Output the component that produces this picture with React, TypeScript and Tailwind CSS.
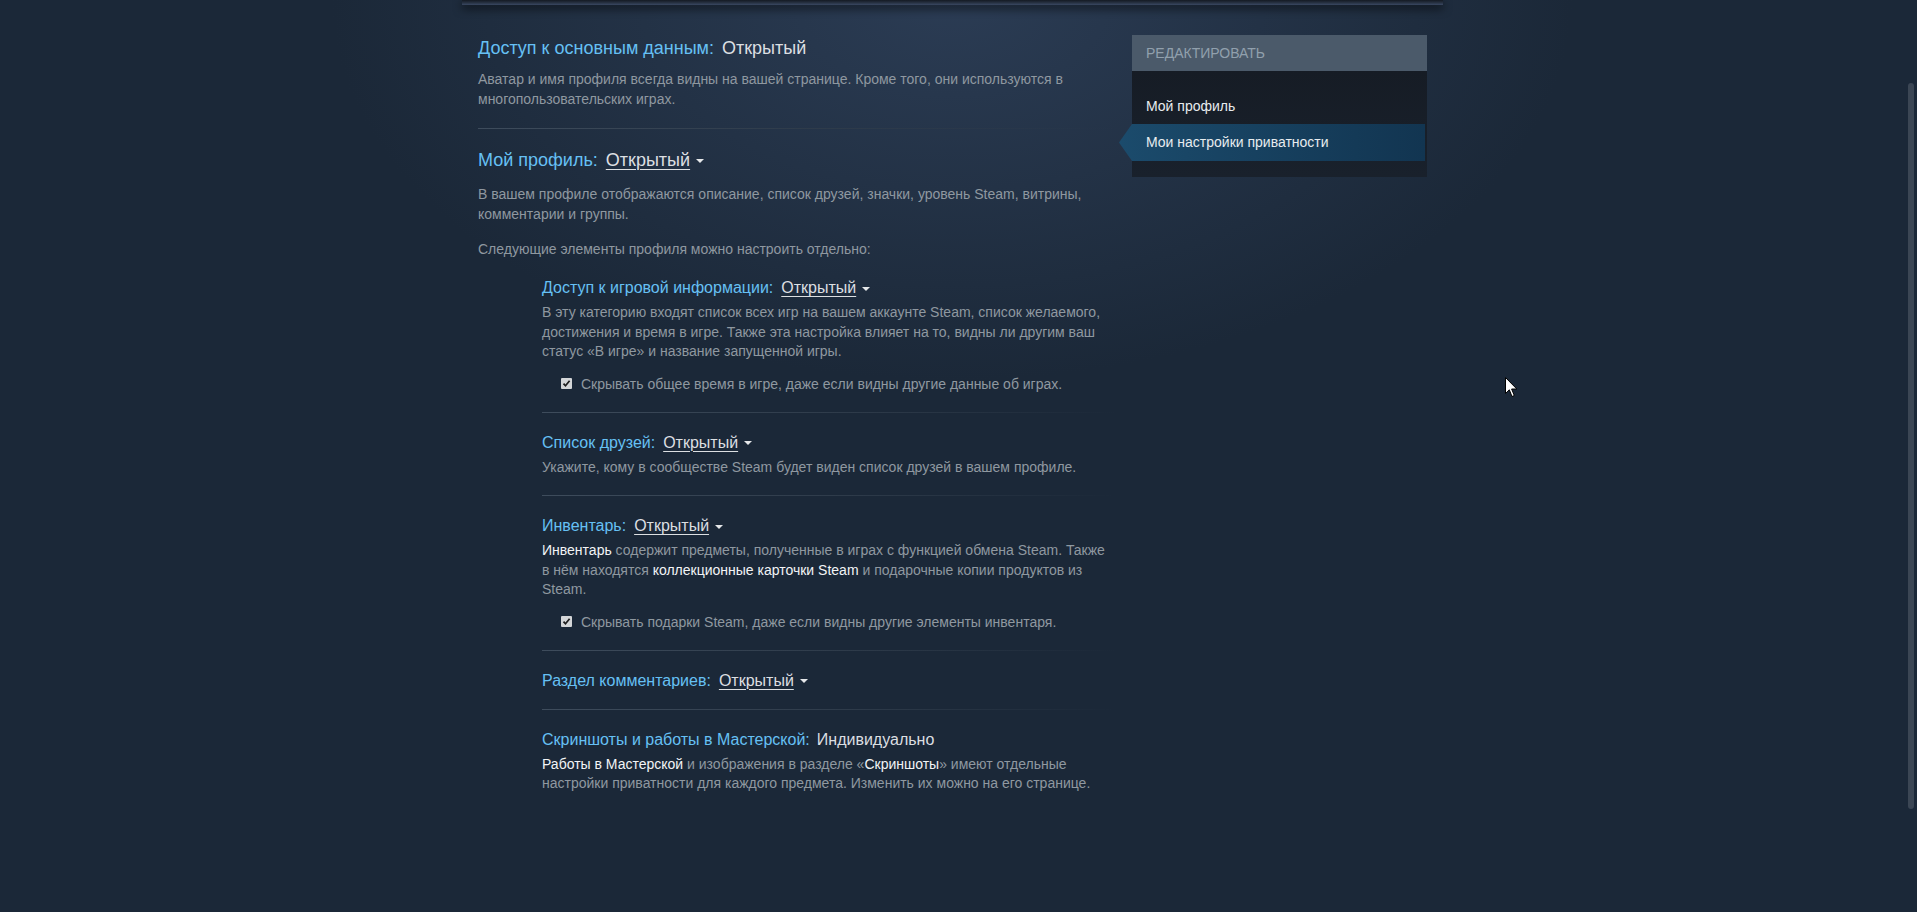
const FONT = "font-['Liberation_Sans',Arial,sans-serif]"

function Caret() {
  return (
    <span className="inline-block w-0 h-0 ml-[6px] align-middle border-l-[4px] border-r-[4px] border-t-[4px] border-l-transparent border-r-transparent border-t-[#e6e8ea]" />
  )
}

function Dropdown({ value }: { value: string }) {
  return (
    <span className="ml-[8px] whitespace-nowrap">
      <span className="text-[#dcdfe2] underline underline-offset-[3px] decoration-1">{value}</span>
      <Caret />
    </span>
  )
}

function Check() {
  return (
    <span className="inline-flex shrink-0 items-center justify-center w-[11px] h-[11px] bg-[#d4d6d8] rounded-[1px] mr-[9px]">
      <svg width="9" height="9" viewBox="0 0 9 9">
        <path d="M1.5 4.6 L3.5 6.8 L7.6 1.8" fill="none" stroke="#1c1c1c" strokeWidth="1.7" />
      </svg>
    </span>
  )
}

const W = ({ children }: { children: React.ReactNode }) => <span className="text-[#f2f4f6]">{children}</span>

type Sub = {
  label: string
  value: string
  dropdown: boolean
  desc?: React.ReactNode
  checkbox?: string
}

const SUBS: Sub[] = [
  {
    label: 'Доступ к игровой информации:',
    value: 'Открытый',
    dropdown: true,
    desc: 'В эту категорию входят список всех игр на вашем аккаунте Steam, список желаемого, достижения и время в игре. Также эта настройка влияет на то, видны ли другим ваш статус «В игре» и название запущенной игры.',
    checkbox: 'Скрывать общее время в игре, даже если видны другие данные об играх.',
  },
  {
    label: 'Список друзей:',
    value: 'Открытый',
    dropdown: true,
    desc: 'Укажите, кому в сообществе Steam будет виден список друзей в вашем профиле.',
  },
  {
    label: 'Инвентарь:',
    value: 'Открытый',
    dropdown: true,
    desc: (
      <>
        <W>Инвентарь</W> содержит предметы, полученные в играх с функцией обмена Steam. Также в нём находятся{' '}
        <W>коллекционные карточки Steam</W> и подарочные копии продуктов из Steam.
      </>
    ),
    checkbox: 'Скрывать подарки Steam, даже если видны другие элементы инвентаря.',
  },
  { label: 'Раздел комментариев:', value: 'Открытый', dropdown: true },
  {
    label: 'Скриншоты и работы в Мастерской:',
    value: 'Индивидуально',
    dropdown: false,
    desc: (
      <>
        <W>Работы в Мастерской</W> и изображения в разделе «<W>Скриншоты</W>» имеют отдельные настройки приватности для
        каждого предмета. Изменить их можно на его странице.
      </>
    ),
  },
]

function Separator() {
  return <div className="h-px bg-gradient-to-r from-[#3e4c5c] via-[#2f3c4b] to-transparent" />
}

export default function App() {
  return (
    <div
      className={`${FONT} relative h-[912px] overflow-hidden bg-[#1b2838] bg-[radial-gradient(ellipse_620px_380px_at_952px_0px,#2b3c54_0%,#1b2838_100%)]`}
    >
      <div className="flex justify-center pr-[12px]">
        <div className="w-[981px]">
          {/* top bar of the page frame */}
          <div className="h-[5px] bg-gradient-to-b from-[#141a23] via-[#252f3f] to-[#3a4862] shadow-[0_3px_10px_rgba(0,0,0,0.75)]" />

          <div className="flex justify-between px-4 pt-[31px]">
            {/* main column */}
            <div className="w-[638px] text-[14px] text-[#8f98a0]">
              <h2 className="text-[18px] leading-[24px] text-[#66c0f4]">
                Доступ к основным данным:<span className="ml-[8px] text-[#dcdfe2]">Открытый</span>
              </h2>
              <p className="mt-[9px] leading-[20px]">
                Аватар и имя профиля всегда видны на вашей странице. Кроме того, они используются в многопользовательских
                играх.
              </p>
              <div className="mt-[19px]">
                <Separator />
              </div>

              <h2 className="mt-[19px] text-[18px] leading-[24px] text-[#66c0f4]">
                Мой профиль:
                <Dropdown value="Открытый" />
              </h2>
              <p className="mt-[12px] leading-[20px]">
                В вашем профиле отображаются описание, список друзей, значки, уровень Steam, витрины, комментарии и группы.
              </p>
              <p className="mt-[15px] leading-[20px]">Следующие элементы профиля можно настроить отдельно:</p>

              <div className="pl-[64px]">
                {SUBS.map((s, i) => (
                  <div key={s.label}>
                    <div className={i === 0 ? 'pt-[19px] pb-[18px]' : 'pt-[20px] pb-[18px]'}>
                      <h3 className="text-[16px] leading-[20px] text-[#66c0f4]">
                        {s.label}
                        {s.dropdown ? (
                          <Dropdown value={s.value} />
                        ) : (
                          <span className="ml-[7px] text-[#dcdfe2]">{s.value}</span>
                        )}
                      </h3>
                      {s.desc && <p className="mt-[5px] leading-[19.5px]">{s.desc}</p>}
                      {s.checkbox && (
                        <div className="mt-[12px] pl-[19px] leading-[20px] flex items-center">
                          <Check />
                          {s.checkbox}
                        </div>
                      )}
                    </div>
                    {i < SUBS.length - 1 && <Separator />}
                  </div>
                ))}
              </div>
            </div>

            {/* right edit panel */}
            <div className="w-[295px] self-start -mt-px">
              <div className="h-[36px] bg-[#4b5a6a] px-[14px] flex items-center text-[14px] uppercase text-[#91a0ad]">
                Редактировать
              </div>
              <div className="bg-gradient-to-b from-[#161c25] to-[#19212c] pt-[17px] pb-[16px] text-[14px] text-[#e8ecef]">
                <div className="h-[36px] px-[14px] flex items-center">Мой профиль</div>
                <div className="-ml-[13px] mr-[2px] h-[37px] pl-[27px] flex items-center bg-gradient-to-r from-[#1b4b6c] to-[#123551] [clip-path:polygon(13px_0,100%_0,100%_100%,13px_100%,0_50%)]">
                  Мои настройки приватности
                </div>
              </div>
            </div>
          </div>
        </div>
      </div>

      {/* overlay scrollbar thumb */}
      <div className="absolute left-[1908px] top-[83px] w-[6px] h-[726px] rounded-[3px] bg-[#3b4654]" />

      {/* mouse pointer */}
      <svg className="absolute left-[1505px] top-[377px]" width="13" height="21" viewBox="0 0 13 21">
        <path d="M0.5 0.5 L0.5 16.5 L4.3 12.8 L7 19.5 L9.3 18.5 L6.6 12 L11.8 12 Z" fill="#fff" stroke="#000" strokeWidth="1" />
      </svg>
    </div>
  )
}
